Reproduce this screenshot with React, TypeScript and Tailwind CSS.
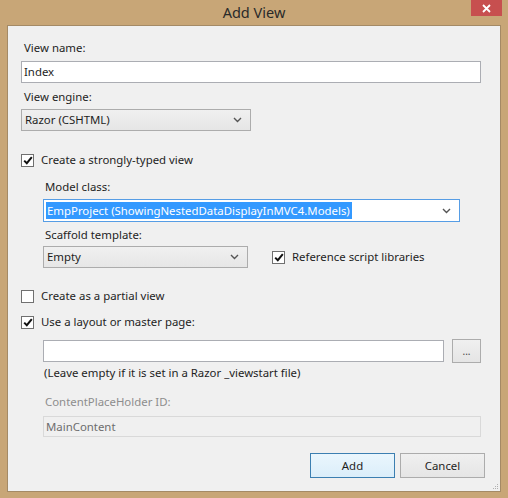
import React from "react";

const font = "font-['Segoe_UI','Noto_Sans','Liberation_Sans',sans-serif]";

const Chevron: React.FC = () => (
  <svg width="9" height="6" viewBox="0 0 9 6" className="shrink-0">
    <path d="M1 1 L4.5 4.5 L8 1" fill="none" stroke="#555" strokeWidth="1.4" />
  </svg>
);

const Check: React.FC<{ checked?: boolean }> = ({ checked }) => (
  <div className="w-[13px] h-[13px] border border-[#707070] bg-white flex items-center justify-center shrink-0">
    {checked && (
      <svg width="10" height="9" viewBox="0 0 10 9">
        <path d="M1.2 4.6 L3.8 7.2 L8.8 1.2" fill="none" stroke="#111" strokeWidth="2" />
      </svg>
    )}
  </div>
);

const Select: React.FC<{ text: string; className?: string }> = ({ text, className }) => (
  <div
    className={`h-[22px] border border-[#acacac] bg-gradient-to-b from-[#f0f0f0] to-[#e6e6e6] flex items-center justify-between pl-[3px] pr-[8px] text-[#1e1e1e] ${className ?? ""}`}
  >
    <span>{text}</span>
    <Chevron />
  </div>
);

export default function App() {
  return (
    <div className={`w-[508px] h-[498px] bg-[#c8a677] flex flex-col text-[11.4px] leading-[16px] ${font}`}>
      {/* title bar */}
      <div className="relative h-[25px] shrink-0 flex items-center justify-center">
        <span className="text-[14.5px] text-[#2a2a2a] mt-[-2px]">Add View</span>
        <div className="absolute right-[6px] top-0 w-[31px] h-[16px] bg-[#c74f4f] flex items-center justify-center">
          <svg width="9" height="9" viewBox="0 0 9 9">
            <path d="M1 1 L8 8 M8 1 L1 8" stroke="#fff" strokeWidth="1.8" />
          </svg>
        </div>
      </div>

      {/* client area */}
      <div className="relative mx-[7px] mb-[6px] flex-1 border border-[#a48a66] bg-[#f0f0f0] pl-[13px] pr-[19px] pt-[14px] flex flex-col text-[#1e1e1e]">
        <div className="pl-[3px]">View name:</div>
        <div className="mt-[5px] h-[22px] border border-[#abadb3] bg-white pl-[2px] flex items-center">Index</div>

        <div className="mt-[6px] pl-[3px]">View engine:</div>
        <Select text="Razor (CSHTML)" className="mt-[4px] w-[230px]" />

        <div className="mt-[21px] flex items-center gap-[7px] h-[16px]">
          <Check checked />
          <span>Create a strongly-typed view</span>
        </div>

        <div className="pl-[22px] flex flex-col">
          <div className="mt-[11px] pl-[2px]">Model class:</div>
          <div className="mt-[4px] h-[23px] w-[417px] border border-[#569de5] bg-white flex items-center justify-between pl-[2px] pr-[8px]">
            <span className="bg-[#3399ff] text-white h-[17px] flex items-center pl-[1px] pr-[2px]">
              EmpProject (ShowingNestedDataDisplayInMVC4.Models)
            </span>
            <Chevron />
          </div>

          <div className="mt-[5px] pl-[2px]">Scaffold template:</div>
          <div className="mt-[3px] flex items-center">
            <Select text="Empty" className="w-[205px]" />
            <div className="ml-[24px] flex items-center gap-[7px]">
              <Check checked />
              <span>Reference script libraries</span>
            </div>
          </div>
        </div>

        <div className="mt-[20px] flex items-center gap-[7px] h-[16px]">
          <Check />
          <span>Create as a partial view</span>
        </div>
        <div className="mt-[10px] flex items-center gap-[7px] h-[16px]">
          <Check checked />
          <span>Use a layout or master page:</span>
        </div>

        <div className="pl-[22px] flex flex-col">
          <div className="mt-[9px] flex items-center h-[24px]">
            <div className="w-[401px] h-[22px] border border-[#abadb3] bg-white" />
            <div className="ml-[8px] w-[29px] h-[24px] border border-[#acacac] bg-gradient-to-b from-[#f0f0f0] to-[#e5e5e5] flex items-center justify-center text-[10px] text-[#444]">
              ...
            </div>
          </div>
          <div className="mt-[2px] pl-[1px]">(Leave empty if it is set in a Razor _viewstart file)</div>

          <div className="mt-[13px] pl-[2px] text-[#8d8d8d]">ContentPlaceHolder ID:</div>
          <div className="mt-[6px] h-[21px] border border-[#d9d9d9] bg-[#f0f0f0] pl-[2px] flex items-center text-[#6d6d6d]">
            MainContent
          </div>
        </div>

        <div className="mt-[16px] flex justify-end gap-[5px] mr-[-4px]">
          <div className="w-[85px] h-[25px] border border-[#3c7fb1] bg-gradient-to-b from-[#eaf6fd] to-[#dbeefa] flex items-center justify-center">
            Add
          </div>
          <div className="w-[85px] h-[25px] border border-[#acacac] bg-gradient-to-b from-[#f0f0f0] to-[#e5e5e5] flex items-center justify-center">
            Cancel
          </div>
        </div>

        <div className="absolute right-[2px] bottom-[2px] grid grid-cols-3 gap-[1px]">
          {[0, 0, 1, 0, 1, 1, 1, 1, 1].map((v, i) => (
            <div key={i} className={`w-[1px] h-[1px] ${v ? "bg-[#b0b0b0]" : "bg-transparent"}`} />
          ))}
        </div>
      </div>
    </div>
  );
}
